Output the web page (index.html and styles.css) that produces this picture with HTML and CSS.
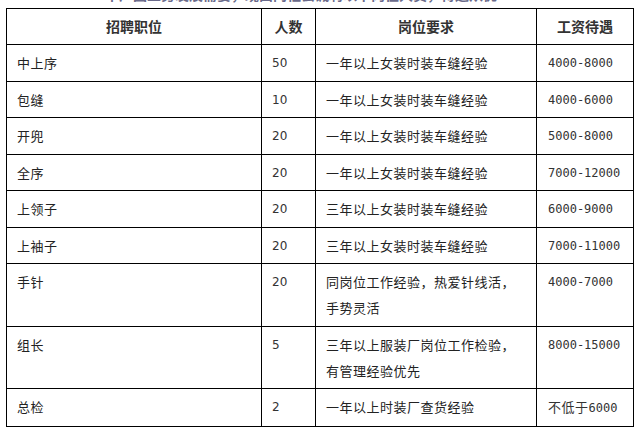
FILE: index.html
```html
<!DOCTYPE html>
<html lang="zh-CN">
<head>
<meta charset="utf-8">
<title>招聘职位</title>
<link rel="stylesheet" href="styles.css">
</head>
<body>
<div class="page">
  <div class="caption"><p class="caption-text">本厂因业务发展需要，现面向社会诚聘以下岗位人员，待遇从优</p></div>
  <table class="jobs">
    <colgroup>
      <col class="c-pos"><col class="c-num"><col class="c-req"><col class="c-pay">
    </colgroup>
    <thead>
      <tr><th>招聘职位</th><th>人数</th><th>岗位要求</th><th>工资待遇</th></tr>
    </thead>
    <tbody>
      <tr><td>中上序</td><td class="num">50</td><td>一年以上女装时装车缝经验</td><td class="pay">4000-8000</td></tr>
      <tr><td>包缝</td><td class="num">10</td><td>一年以上女装时装车缝经验</td><td class="pay">4000-6000</td></tr>
      <tr><td>开兜</td><td class="num">20</td><td>一年以上女装时装车缝经验</td><td class="pay">5000-8000</td></tr>
      <tr><td>全序</td><td class="num">20</td><td>一年以上女装时装车缝经验</td><td class="pay">7000-12000</td></tr>
      <tr><td>上领子</td><td class="num">20</td><td>三年以上女装时装车缝经验</td><td class="pay">6000-9000</td></tr>
      <tr><td>上袖子</td><td class="num">20</td><td>三年以上女装时装车缝经验</td><td class="pay">7000-11000</td></tr>
      <tr><td>手针</td><td class="num">20</td><td>同岗位工作经验，热爱针线活，<br>手势灵活</td><td class="pay">4000-7000</td></tr>
      <tr><td>组长</td><td class="num">5</td><td>三年以上服装厂岗位工作检验，<br>有管理经验优先</td><td class="pay">8000-15000</td></tr>
      <tr><td>总检</td><td class="num">2</td><td>一年以上时装厂查货经验</td><td class="pay"><span class="cjk">不低于</span>6000</td></tr>
    </tbody>
  </table>
</div>
</body>
</html>
```

FILE: styles.css
```css
html, body {
  margin: 0;
  padding: 0;
  background: #ffffff;
}

.page {
  padding-left: 6px;
  font-family: "Noto Sans CJK SC", "Noto Sans", sans-serif;
  color: #222222;
}

.caption {
  height: 8px;
  overflow: hidden;
}

.caption-text {
  margin: -13px 0 0 0;
  padding-left: 99px;
  font-size: 14px;
  line-height: 14px;
  font-weight: bold;
  letter-spacing: 0;
  color: #6a6a8a;
  white-space: nowrap;
}

.jobs {
  border-collapse: collapse;
  width: 627px;
  table-layout: fixed;
}

.c-pos { width: 255px; }
.c-num { width: 54px; }
.c-req { width: 221px; }
.c-pay { width: 97px; }

.jobs th,
.jobs td {
  border: 1px solid #000000;
  vertical-align: top;
}

.jobs th {
  padding: 4px 0 4px 0;
  font-size: 14px;
  line-height: 27px;
  font-weight: bold;
  text-align: center;
  color: #333333;
}

.jobs td {
  padding: 5px 10px 4.5px 10px;
  font-size: 13px;
  line-height: 26px;
  letter-spacing: 0.5px;
  text-align: left;
  color: #222222;
}

.jobs td.num {
  font-family: "DejaVu Sans", sans-serif;
  font-size: 12px;
  letter-spacing: 0;
  color: #333333;
}

.jobs td.pay {
  padding-left: 11px;
  font-family: "DejaVu Sans Mono", "Noto Sans CJK SC", monospace;
  font-size: 12px;
  letter-spacing: 0;
  color: #333333;
}

.jobs td.pay .cjk {
  font-family: "Noto Sans CJK SC", sans-serif;
  font-size: 13px;
  letter-spacing: 0.5px;
}
```
